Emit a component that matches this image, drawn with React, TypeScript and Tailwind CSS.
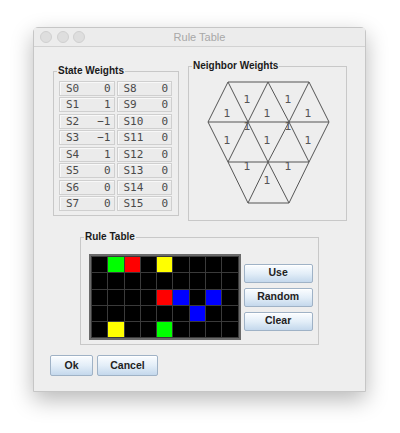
import React from "react";

const stateWeights: [string, number][] = [
  ["S0", 0], ["S1", 1], ["S2", -1], ["S3", -1],
  ["S4", 1], ["S5", 0], ["S6", 0], ["S7", 0],
  ["S8", 0], ["S9", 0], ["S10", 0], ["S11", 0],
  ["S12", 0], ["S13", 0], ["S14", 0], ["S15", 0],
];

const ruleRows = [
  "kgrkykkkk",
  "kkkkkkkkk",
  "kkkkrbkbk",
  "kkkkkkbkk",
  "kykkgkkkk",
];

const cellColor: Record<string, string> = {
  k: "bg-black",
  g: "bg-[#00ff00]",
  r: "bg-[#ff0000]",
  y: "bg-[#ffff00]",
  b: "bg-[#0000ff]",
};

// triangle lattice, page coordinates
const A = { y: 83, xs: [228, 268, 309] };
const B = { y: 123, xs: [208, 248, 289, 329] };
const C = { y: 163, xs: [228, 268, 309] };
const D = { y: 204, xs: [248, 289] };

const edges: [number, number, number, number][] = [
  [A.xs[0], A.y, A.xs[2], A.y],
  [B.xs[0], B.y, B.xs[3], B.y],
  [C.xs[0], C.y, C.xs[2], C.y],
  [D.xs[0], D.y, D.xs[1], D.y],
  [B.xs[0], B.y, A.xs[0], A.y],
  [A.xs[0], A.y, B.xs[1], B.y],
  [B.xs[1], B.y, A.xs[1], A.y],
  [A.xs[1], A.y, B.xs[2], B.y],
  [B.xs[2], B.y, A.xs[2], A.y],
  [A.xs[2], A.y, B.xs[3], B.y],
  [B.xs[0], B.y, C.xs[0], C.y],
  [C.xs[0], C.y, B.xs[1], B.y],
  [B.xs[1], B.y, C.xs[1], C.y],
  [C.xs[1], C.y, B.xs[2], B.y],
  [B.xs[2], B.y, C.xs[2], C.y],
  [C.xs[2], C.y, B.xs[3], B.y],
  [C.xs[0], C.y, D.xs[0], D.y],
  [D.xs[0], D.y, C.xs[1], C.y],
  [C.xs[1], C.y, D.xs[1], D.y],
  [D.xs[1], D.y, C.xs[2], C.y],
];

const labels: [number, number][] = [
  [228, 114], [248, 100], [268, 114], [289, 100], [309, 114],
  [228, 141], [248, 127], [268, 141], [289, 127], [309, 141],
  [248, 167], [268, 181], [289, 167],
];

const legendCls =
  "ml-[3px] px-px text-[10px] leading-[12px] font-bold text-[#1a1a1a] [font-family:'Liberation_Sans',Arial,sans-serif]";

function Btn({ label, className }: { label: string; className: string }) {
  return (
    <button
      className={`${className} rounded-[2px] border border-[#9fb2c6] bg-gradient-to-b from-[#fbfdff] via-[#e3eef8] to-[#c4d8ec] text-[10.5px] font-bold text-[#222] shadow-[inset_0_1px_0_#fff] [font-family:'Liberation_Sans',Arial,sans-serif]`}
    >
      {label}
    </button>
  );
}

function WeightCell({ name, value }: { name: string; value: number }) {
  return (
    <div className="flex h-[15px] items-center justify-between border border-[#cfcfcf] bg-[#ebebeb] pl-[6px] pr-[3px] text-[11px] leading-none text-[#4a4a4a] shadow-[inset_1px_1px_0_#f8f8f8] [font-family:'DejaVu_Sans_Mono',monospace]">
      <span>{name}</span>
      <span>{value < 0 ? `\u2212${-value}` : value}</span>
    </div>
  );
}

export default function App() {
  return (
    <div className="h-[433px] w-[400px] overflow-hidden bg-white pl-[33px] pt-[27px]">
      <div className="flex h-[365px] w-[333px] flex-col rounded-t-[5px] border border-[#c6c6c6] bg-[#eeeeee] shadow-[0_8px_22px_rgba(0,0,0,0.28)]">
        {/* title bar */}
        <div className="relative flex h-[19px] items-center border-b border-[#d2d2d2] bg-[#ececec] pl-[6px]">
          <div className="flex gap-[4.5px]">
            <span className="h-[12px] w-[12px] rounded-full border border-[#d0d0d0] bg-[#dedede]" />
            <span className="h-[12px] w-[12px] rounded-full border border-[#d0d0d0] bg-[#dedede]" />
            <span className="h-[12px] w-[12px] rounded-full border border-[#d0d0d0] bg-[#dedede]" />
          </div>
          <div className="absolute inset-0 flex items-center justify-center text-[11px] text-[#a8a8a8] [font-family:'Liberation_Sans',Arial,sans-serif]">
            Rule Table
          </div>
        </div>

        {/* top row */}
        <div className="mt-[13px] flex items-start pl-[19px]">
          <fieldset className="mt-[5px] w-[126px] border border-[#c8c8c8]">
            <legend className={legendCls}>State Weights</legend>
            <div className="grid grid-flow-col grid-cols-2 grid-rows-8 gap-x-[2px] gap-y-[1.43px] pb-[4px] pl-[5px] pr-[6px] pt-[4px]">
              {stateWeights.map(([n, v]) => (
                <WeightCell key={n} name={n} value={v} />
              ))}
            </div>
          </fieldset>

          <fieldset className="ml-[9px] w-[159px] border border-[#c8c8c8]">
            <legend className={legendCls}>Neighbor Weights</legend>
            <svg width="157" height="148" viewBox="189 73 157 148" className="block">
              {edges.map(([x1, y1, x2, y2], i) => (
                <line key={i} x1={x1} y1={y1} x2={x2} y2={y2} stroke="#555" strokeWidth="1" />
              ))}
              {labels.map(([x, y], i) => (
                <text
                  key={i}
                  x={x - 1}
                  y={y + 4}
                  textAnchor="middle"
                  fontSize="11"
                  fill="#555"
                  fontFamily="'DejaVu Sans', sans-serif"
                >
                  1
                </text>
              ))}
            </svg>
          </fieldset>
        </div>

        {/* rule table */}
        <fieldset className="mx-auto mt-[10px] w-[239px] border border-[#c8c8c8]">
          <legend className={legendCls}>Rule Table</legend>
          <div className="flex items-center gap-[3px] pb-[4px] pl-[8px] pr-[5px] pt-[11px]">
            <div className="border-[2px] border-[#6a6a6a] bg-[#3a3a3a] p-px">
              <div className="grid grid-cols-[repeat(9,15.3px)] grid-rows-[repeat(5,15.3px)] gap-px">
                {ruleRows.flatMap((row, r) =>
                  row.split("").map((c, i) => (
                    <div key={`${r}-${i}`} className={cellColor[c]} />
                  ))
                )}
              </div>
            </div>
            <div className="flex flex-col gap-[5px]">
              <Btn label="Use" className="h-[19px] w-[69px]" />
              <Btn label="Random" className="h-[19px] w-[69px]" />
              <Btn label="Clear" className="h-[19px] w-[69px]" />
            </div>
          </div>
        </fieldset>

        {/* dialog buttons */}
        <div className="mt-[10px] flex gap-[4px] pl-[16px]">
          <Btn label="Ok" className="h-[21px] w-[43px]" />
          <Btn label="Cancel" className="h-[21px] w-[61px]" />
        </div>
      </div>
    </div>
  );
}
